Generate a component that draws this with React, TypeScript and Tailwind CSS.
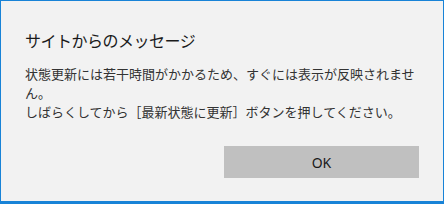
import React from 'react';

const App: React.FC = () => {
    return (
        <div
            className="w-[444px] h-[204px] bg-[#f2f2f2] border border-[#1883d7] border-b-[3px] flex flex-col"
            style={{ fontFamily: '"Noto Sans CJK JP", "Noto Sans", sans-serif' }}
        >
            <div className="pl-6 pt-[27px]">
                <h1 className="text-[16px] leading-[24px] tracking-[-0.5px] text-[#1a1a1a]">
                    サイトからのメッセージ
                </h1>
                <p className="mt-3 w-[396px] text-[13px] leading-[19px] text-[#333333]">
                    状態更新には若干時間がかかるため、すぐには表示が反映されません。
                    <br />
                    しばらくしてから［最新状態に更新］ボタンを押してください。
                </p>
            </div>
            <div className="flex justify-end pr-6 mt-[25px]">
                <button
                    className="w-[195px] h-[32px] bg-[#c0c0c0] text-[14px] text-[#1a1a1a] flex items-center justify-center"
                    style={{ fontFamily: '"Noto Sans", sans-serif' }}
                >
                    OK
                </button>
            </div>
        </div>
    );
};

export default App;
